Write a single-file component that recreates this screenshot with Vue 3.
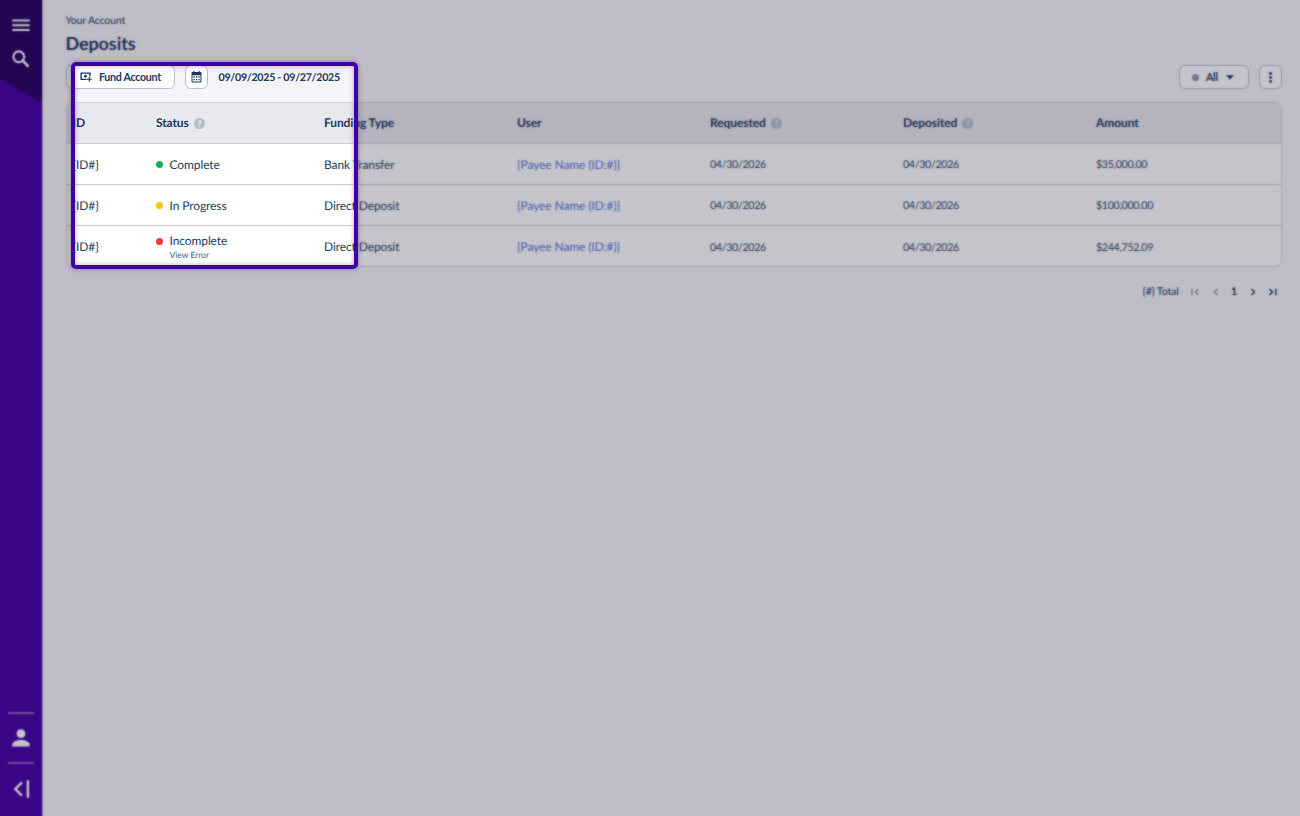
<script setup>
const columns = [
  { label: 'ID' },
  { label: 'Status', help: true },
  { label: 'Funding Type' },
  { label: 'User' },
  { label: 'Requested', help: true },
  { label: 'Deposited', help: true },
  { label: 'Amount' },
]

const rows = [
  { status: 'Complete', color: 'green', type: 'Bank Transfer', amount: '$35,000.00' },
  { status: 'In Progress', color: 'yellow', type: 'Direct Deposit', amount: '$100,000.00' },
  { status: 'Incomplete', color: 'red', note: 'View Error', type: 'Direct Deposit', amount: '$244,752.09' },
].map((r) => ({ id: '{ID#}', user: '{Payee Name (ID:#)}', requested: '04/30/2026', deposited: '04/30/2026', ...r }))
</script>

<template>
  <div class="screen">
    <aside class="sidebar">
      <div class="side-top">
        <svg class="ico-menu" width="18" height="13" viewBox="0 0 18 13"><path d="M.3 1.500h17.400M.3 6.300h17.400M.3 11.100h17.400" stroke="#fff" stroke-width="2" /></svg>
        <svg class="ico-search" width="18" height="18" viewBox="0 0 18 18" fill="none" stroke="#fff"><circle cx="6.800" cy="6.800" r="5.400" stroke-width="2.100" /><path d="M10.700 10.700l5.900 5.900" stroke-width="2.600" /></svg>
      </div>
      <div class="side-bottom">
        <i class="rule"></i>
        <svg class="ico-user" width="18" height="18" viewBox="0 0 18 18" fill="#fff"><circle cx="9" cy="4.700" r="4.400" /><path d="M.3 17.600v-2C.3 12.800 4.700 11 9 11s8.700 1.800 8.700 4.600v2z" /></svg>
        <i class="rule"></i>
        <svg class="ico-collapse" width="17" height="18" viewBox="0 0 17 18" fill="none" stroke="#fff" stroke-width="2.400"><path d="M8.900 2.300L2.300 9l6.600 6.700M14.900 .3v17.400" /></svg>
      </div>
    </aside>

    <main class="content">
      <div class="crumb">Your Account</div>
      <h1>Deposits</h1>

      <div class="toolbar">
        <button class="btn fund">
          <svg width="12" height="10" viewBox="0 0 12 10" fill="none" stroke="#1b365d" stroke-width="1.300"><path d="M10 4.300V1.200H1.100V7.300H6.700" /><circle cx="5.500" cy="4.200" r="1.400" fill="#1b365d" stroke="none" /><path d="M1.200 2.700l1.300-1.300M1.200 5.800l1.300 1.300M8.500 1.400l1.300 1.300" stroke-width="1" /><path d="M9.300 4.700v5M6.900 7.200h4.900" stroke-width="1.100" /></svg>
          <span>Fund Account</span>
        </button>
        <button class="btn square">
          <svg width="11" height="12" viewBox="0 0 11 12"><path d="M1.500 1h8a1 1 0 0 1 1 1v8.500a1 1 0 0 1-1 1h-8a1 1 0 0 1-1-1V2a1 1 0 0 1 1-1zM1.500 4.200v6.300h8V4.200z" fill="#1b365d" fill-rule="evenodd" /><path d="M2.800 0v2M8.200 0v2" stroke="#1b365d" stroke-width="1.100" /><path d="M2.400 6h6.400M2.400 8.600h6.400" stroke="#1b365d" stroke-width="1.300" stroke-dasharray="1.300 1.200" /></svg>
        </button>
        <span class="range">09/09/2025 - 09/27/2025</span>
        <span class="spacer"></span>
        <button class="btn filter">
          <i class="dot slate"></i><span>All</span>
          <svg width="8" height="5" viewBox="0 0 8 5"><path d="M0 .3h8L4 4.500z" fill="#1b365d" /></svg>
        </button>
        <button class="btn square">
          <svg width="3" height="11" viewBox="0 0 3 11" fill="#1b365d"><circle cx="1.500" cy="1.500" r="1.450" /><circle cx="1.500" cy="5.500" r="1.450" /><circle cx="1.500" cy="9.500" r="1.450" /></svg>
        </button>
      </div>

      <section class="table">
        <div class="row head">
          <div v-for="c in columns" :key="c.label" class="cell">
            <span>{{ c.label }}</span>
            <span v-if="c.help" class="help">?</span>
          </div>
        </div>
        <div v-for="r in rows" :key="r.status" class="row">
          <div class="cell">{{ r.id }}</div>
          <div class="cell status" :class="{ noted: r.note }">
            <i class="dot" :class="r.color"></i>
            <div>
              <div class="label">{{ r.status }}</div>
              <div v-if="r.note" class="note">{{ r.note }}</div>
            </div>
          </div>
          <div class="cell">{{ r.type }}</div>
          <div class="cell link">{{ r.user }}</div>
          <div class="cell num">{{ r.requested }}</div>
          <div class="cell num">{{ r.deposited }}</div>
          <div class="cell num">{{ r.amount }}</div>
        </div>
      </section>

      <footer class="pager">
        <span class="total">{#} Total</span>
        <svg class="off" width="9" height="8" viewBox="0 0 9 8"><path d="M1 .7v6.600M7.500 1L4.500 4l3 3" /></svg>
        <svg class="off" width="6" height="8" viewBox="0 0 6 8"><path d="M4.500 1L1.500 4l3 3" /></svg>
        <b>1</b>
        <svg width="6" height="8" viewBox="0 0 6 8"><path d="M1.500 1l3 3-3 3" /></svg>
        <svg width="9" height="8" viewBox="0 0 9 8"><path d="M1.500 1l3 3-3 3M7.800 .7v6.600" /></svg>
      </footer>
    </main>

    <div class="veil soften"></div>
    <div class="veil tint"></div>
    <div class="spotlight"></div>
  </div>
</template>

<style>
body {
  margin: 0;
}
</style>

<style scoped>
.screen {
  position: relative;
  display: flex;
  width: 1300px;
  height: 816px;
  overflow: hidden;
  background: #f5f5f9;
  color: #1b365d;
  font: 12px/14px Lato, "Open Sans", sans-serif;
  letter-spacing: -0.1px;
  text-rendering: geometricPrecision;
}
.sidebar {
  box-sizing: border-box;
  width: 43px;
  display: flex;
  flex-direction: column;
  justify-content: space-between;
  background: #4400a5;
  border-right: 1px solid #b9a8d8;
}
.side-top {
  height: 103px;
  box-sizing: border-box;
  padding: 19px 0 0 12px;
  background: #270061;
  clip-path: polygon(0 0, 100% 0, 100% 100%, 0 79px);
}
.side-top svg {
  display: block;
}
.ico-search {
  margin-top: 18px;
}
.side-bottom {
  height: 104px;
  display: flex;
  flex-direction: column;
  align-items: center;
}
.rule {
  width: 26px;
  height: 2px;
  flex: none;
  background: #8a63c4;
}
.ico-user {
  margin: 15px 0;
}
.ico-collapse {
  margin-top: 16px;
}
.content {
  flex: 1;
  padding: 13.500px 18px 0 22.500px;
}
.crumb {
  font-size: 10.500px;
  letter-spacing: -0.150px;
  line-height: 14px;
}
h1 {
  margin: 5.500px 0 0;
  font-size: 18px;
  line-height: 20px;
  font-weight: 700;
}
.toolbar {
  display: flex;
  align-items: center;
  margin-top: 12px;
  height: 25px;
  font-size: 10.700px;
  letter-spacing: -0.300px;
  font-weight: 700;
}
.btn {
  box-sizing: border-box;
  display: flex;
  align-items: center;
  height: 24px;
  margin-bottom: 1px;
  padding: 0;
  background: #fff;
  border: 1px solid #b7bfcc;
  border-radius: 6px;
  font: inherit;
  letter-spacing: inherit;
  color: inherit;
}
.fund {
  width: 109px;
  padding-left: 13px;
  gap: 7.500px;
}
.range {
  padding-top: 1px;
}
.square {
  width: 23.500px;
  margin-left: 10px;
  justify-content: center;
}
.range {
  margin-left: 10.500px;
}
.spacer {
  flex: 1;
}
.filter {
  width: 70px;
  padding-left: 12.500px;
}
.filter span {
  margin: 0 8px 0 7px;
}
.dot {
  width: 7px;
  height: 7px;
  flex: none;
  border-radius: 50%;
}
.slate { background: #8d98ad; }
.green { background: #14ae5c; }
.yellow { background: #f5c518; }
.red { background: #e63946; }
.table {
  box-sizing: border-box;
  margin-top: 12px;
  height: 165px;
  border: 1px solid #cfd3dc;
  border-radius: 7px;
  overflow: hidden;
  background: #fff;
  color: #243c60;
}
.row {
  box-sizing: border-box;
  height: 41px;
  display: grid;
  grid-template-columns: 83.500px 168px 193px 193px 193px 193px 1fr;
  padding: 1px 0 0 6px;
  border-bottom: 1px solid #c9cedb;
}
.row:last-child {
  border-bottom: 0;
}
.cell {
  display: flex;
  align-items: center;
}
.head {
  padding-top: 0;
  background: #e8e9ee;
  color: #1b365d;
  font-weight: 700;
}
.help {
  width: 11px;
  height: 11px;
  margin-left: 5px;
  border-radius: 50%;
  background: #b4bcc9;
  color: #eef0f4;
  font-size: 9px;
  line-height: 11px;
  text-align: center;
}
.status {
  gap: 6.500px;
}
.noted {
  align-items: flex-start;
  padding-top: 7px;
}
.noted .dot {
  margin-top: 4px;
}
.note {
  font-size: 8.700px;
  line-height: 14px;
  color: #4a5f80;
}
.link {
  color: #4f78da;
}
.num {
  padding-top: 1px;
  font-size: 10.700px;
  letter-spacing: -0.330px;
  color: #2b4265;
}
.pager {
  display: flex;
  align-items: center;
  justify-content: flex-end;
  height: 16px;
  margin-top: 17px;
  padding-right: 5px;
  gap: 12.500px;
  font-size: 10.700px;
  letter-spacing: -0.200px;
}
.pager svg {
  fill: none;
  stroke: #1b365d;
  stroke-width: 1.400;
}
.pager .off {
  stroke: #8d98ad;
}
/* Everything outside the highlighted region is slightly out of focus and dimmed. */
.veil {
  position: absolute;
  inset: 0;
  clip-path: path(evenodd, "M0 0H1300V816H0ZM73 64H356V267H73Z");
}
.soften {
  backdrop-filter: blur(1px);
  opacity: 0.6;
}
.tint {
  background: rgba(27, 20, 47, 0.25);
}
.spotlight {
  position: absolute;
  left: 71px;
  top: 62px;
  width: 287px;
  height: 207px;
  box-sizing: border-box;
  border: 4px solid #4000a8;
  border-radius: 5px;
  box-shadow: 0 0 5px rgba(30, 20, 60, 0.4), inset 0 0 5px rgba(30, 20, 60, 0.35);
}
</style>
